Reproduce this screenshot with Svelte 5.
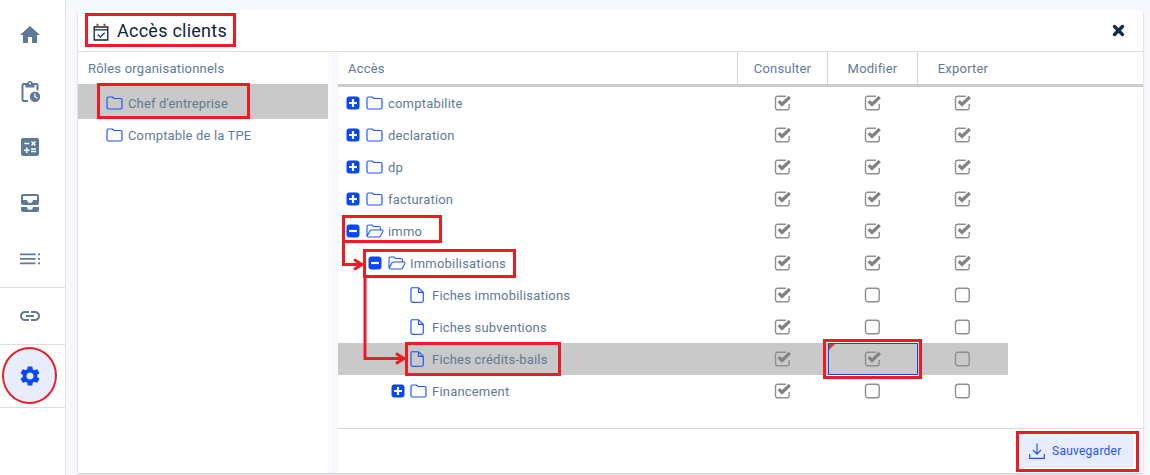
<script>
  const nav = [
    { id: 'home', d: 'M10 20v-6h4v6h5v-8h3L12 3 2 12h3v8z' },
    { id: 'calc', d: 'M19 3H5c-1.1 0-2 .9-2 2v14c0 1.1.9 2 2 2h14c1.1 0 2-.9 2-2V5c0-1.1-.9-2-2-2zm-5.97 4.06L14.09 6l1.41 1.41L16.91 6l1.06 1.06-1.41 1.41 1.41 1.41-1.06 1.06-1.41-1.4-1.41 1.41-1.06-1.06 1.41-1.41-1.41-1.42zm-6.78.66h5v1.5h-5v-1.5zM11.5 16h-2v2H8v-2H6v-1.5h2v-2h1.5v2h2V16zm6.5 1.25h-5v-1.5h5v1.5zm0-2.5h-5v-1.5h5v1.5z' },
    { id: 'inbox', d: 'M19 3H5c-1.1 0-2 .9-2 2v7c0 1.1.9 2 2 2h14c1.1 0 2-.9 2-2V5c0-1.1-.9-2-2-2zm0 6h-4c0 1.62-1.38 3-3 3s-3-1.38-3-3H5V5h14v4zm-4 7h6v3c0 1.1-.9 2-2 2H5c-1.1 0-2-.9-2-2v-3h6c0 1.66 1.34 3 3 3s3-1.34 3-3z' }
  ];
  const linkPath = 'M3.9 12c0-1.71 1.39-3.1 3.1-3.1h4V7H7c-2.76 0-5 2.24-5 5s2.24 5 5 5h4v-1.9H7c-1.71 0-3.1-1.39-3.1-3.1zM8 13h8v-2H8v2zm9-6h-4v1.9h4c1.71 0 3.1 1.39 3.1 3.1s-1.39 3.1-3.1 3.1h-4V17h4c2.76 0 5-2.24 5-5s-2.24-5-5-5z';
  const gearPath = 'M19.14 12.94c.04-.3.06-.61.06-.94 0-.32-.02-.64-.07-.94l2.03-1.58c.18-.14.23-.41.12-.61l-1.92-3.32c-.12-.22-.37-.29-.59-.22l-2.39.96c-.5-.38-1.03-.7-1.62-.94l-.36-2.54c-.04-.24-.24-.41-.48-.41h-3.84c-.24 0-.43.17-.47.41l-.36 2.54c-.59.24-1.13.57-1.62.94l-2.39-.96c-.22-.08-.47 0-.59.22L2.74 8.87c-.12.21-.08.47.12.61l2.03 1.58c-.05.3-.09.63-.09.94s.02.64.07.94l-2.03 1.58c-.18.14-.23.41-.12.61l1.92 3.32c.12.22.37.29.59.22l2.39-.96c.5.38 1.03.7 1.62.94l.36 2.54c.05.24.24.41.48.41h3.84c.24 0 .44-.17.47-.41l.36-2.54c.59-.24 1.13-.56 1.62-.94l2.39.96c.22.08.47 0 .59-.22l1.92-3.32c.12-.22.07-.47-.12-.61l-2.01-1.58zM12 15.6c-1.98 0-3.6-1.62-3.6-3.6s1.62-3.6 3.6-3.6 3.6 1.62 3.6 3.6-1.62 3.6-3.6 3.6z';

  const rows = [
    { label: 'comptabilite', level: 0, toggle: 'plus', icon: 'folder', c: [1, 1, 1] },
    { label: 'declaration', level: 0, toggle: 'plus', icon: 'folder', c: [1, 1, 1] },
    { label: 'dp', level: 0, toggle: 'plus', icon: 'folder', c: [1, 1, 1] },
    { label: 'facturation', level: 0, toggle: 'plus', icon: 'folder', c: [1, 1, 1] },
    { label: 'immo', level: 0, toggle: 'minus', icon: 'open', c: [1, 1, 1] },
    { label: 'Immobilisations', level: 1, toggle: 'minus', icon: 'open', c: [1, 1, 1] },
    { label: 'Fiches immobilisations', level: 2, toggle: '', icon: 'file', c: [1, 0, 0] },
    { label: 'Fiches subventions', level: 2, toggle: '', icon: 'file', c: [1, 0, 0] },
    { label: 'Fiches crédits-bails', level: 2, toggle: '', icon: 'file', c: [1, 1, 0], selected: true },
    { label: 'Financement', level: 2, toggle: 'plus', icon: 'folder', c: [1, 0, 0] }
  ];
  const roles = [
    { label: "Chef d'entreprise", selected: true },
    { label: 'Comptable de la TPE', selected: false }
  ];
  const marks = [
    { n: 'title', x: 85, y: 13, w: 151, h: 34 },
    { n: 'chef', x: 97, y: 83, w: 153, h: 36 },
    { n: 'immo', x: 342, y: 215, w: 100, h: 28 },
    { n: 'immob', x: 363, y: 249, w: 153, h: 29 },
    { n: 'fiche', x: 405, y: 342, w: 156, h: 34 },
    { n: 'cell', x: 823, y: 339, w: 99, h: 40 },
    { n: 'save', x: 1016, y: 431, w: 123, h: 41 }
  ];
</script>

{#snippet folder()}
  <svg class="ico" width="17" height="14" viewBox="0 0 17 14"><path d="M1 3V11.5A1.5 1.5 0 0 0 2.500 13H14.500A1.500 1.500 0 0 0 16 11.500V4A1.500 1.500 0 0 0 14.500 2.500H8L6.500 1H2.500A1.500 1.500 0 0 0 1 2.500Z" fill="none" stroke="#1f55f5" stroke-width="1.200"/></svg>
{/snippet}
{#snippet openFolder()}
  <svg class="ico wide" width="18" height="14" viewBox="0 0 18 14"><path d="M1 12V2.500A1.500 1.500 0 0 1 2.500 1H6L7.500 2.500H13A1.500 1.500 0 0 1 14.500 4V6M1 12.500L4 6.800A1.500 1.500 0 0 1 5.300 6H16A1 1 0 0 1 16.900 7.400L14.500 12A1.800 1.800 0 0 1 13 13H2A1 1 0 0 1 1 12Z" fill="none" stroke="#1f55f5" stroke-width="1.100"/></svg>
{/snippet}
{#snippet file()}
  <svg class="ico narrow" width="14" height="16" viewBox="0 0 14 16"><path d="M1 2A1.500 1.500 0 0 1 2.500 .7H8.500L13.300 5.300V14A1.500 1.500 0 0 1 11.800 15.300H2.500A1.500 1.500 0 0 1 1 14ZM8.500 .7V5.300H13.300" fill="none" stroke="#1f55f5" stroke-width="1.150"/></svg>
{/snippet}
{#snippet checkbox(on)}
  <svg class="box" width="18" height="16" viewBox="0 0 18 16">
    {#if on}
      <path d="M12 1.200H3.700A2.200 2.200 0 0 0 1.500 3.400V12.600A2.200 2.200 0 0 0 3.700 14.800H13A2.200 2.200 0 0 0 15.200 12.600V9" fill="none" stroke="#8f8f8f" stroke-width="1.400"/>
      <path d="M4.700 6.200L8 9.500 15.800 2" fill="none" stroke="#838383" stroke-width="3.200"/>
    {:else}
      <rect x="1.500" y="1.200" width="13.700" height="13.600" rx="2.500" fill="none" stroke="#8f8f8f" stroke-width="1.400"/>
    {/if}
  </svg>
{/snippet}

<div class="page">
  <nav class="side">
    <div class="group first">
      <a class="navitem"><svg width="24" height="24" viewBox="0 0 24 24"><path d={nav[0].d}/></svg></a>
      <a class="navitem"><svg width="24" height="24" viewBox="0 0 24 24">
        <path d="M5.500 4H9.200C9.500 2.700 10.600 1.900 12 1.900S14.500 2.700 14.800 4H18.500A2 2 0 0 1 20.500 6V11.500H18.500V6H16.500V8.500H7.500V6H5.500V21H10V23H5.500A2 2 0 0 1 3.500 21V6A2 2 0 0 1 5.500 4ZM12 3.400A1 1 0 1 0 12 5.400 1 1 0 1 0 12 3.400Z"/>
        <path fill-rule="evenodd" d="M17 12.500A5.200 5.200 0 1 1 17 22.900 5.200 5.200 0 1 1 17 12.500ZM16.300 14.500V18.100L19.200 19.800 19.800 18.800 17.500 17.400V14.500Z"/>
      </svg></a>
      {#each nav.slice(1) as n}
        <a class="navitem"><svg width="24" height="24" viewBox="0 0 24 24"><path d={n.d}/></svg></a>
      {/each}
      <a class="navitem"><svg width="24" height="24" viewBox="0 0 24 24"><path d="M2 6.500H17.500V8.300H2ZM2 11H17.500V12.800H2ZM2 15.500H17.500V17.300H2ZM20 6.500H22V8.300H20ZM20 11H22V12.800H20ZM20 15.500H22V17.300H20Z"/></svg></a>
    </div>
    <div class="group">
      <a class="navitem"><svg width="24" height="24" viewBox="0 0 24 24"><path d={linkPath}/></svg></a>
    </div>
    <div class="group gearwrap">
      <a class="navitem active"><svg width="24" height="24" viewBox="0 0 24 24"><path d={gearPath}/></svg></a>
    </div>
  </nav>

  <main class="card">
    <header class="head">
      <svg class="cal" width="16" height="18" viewBox="0 0 16 18">
        <path d="M1.200 4H14.800V17H1.200ZM1 6.800H15" fill="none" stroke="#10243c" stroke-width="1.300"/>
        <path d="M4.500 .8V5M11.500 .8V5" stroke="#7a5a3a" stroke-width="2"/>
        <path d="M4.700 11.500L7.200 14 11.700 9.800" fill="none" stroke="#123a8c" stroke-width="1.300"/>
      </svg>
      <h1>Accès clients</h1>
      <svg class="close" width="13" height="13" viewBox="0 0 13 13"><path d="M2.500 2.500L10.500 10.500M10.500 2.500L2.500 10.500" stroke="#0f2c4c" stroke-width="3.400" stroke-linecap="round"/></svg>
    </header>
    <div class="body">
      <aside class="roles">
        <div class="rolehead">Rôles organisationnels</div>
        {#each roles as r}
          <div class="role" class:sel={r.selected}>{@render folder()}<span>{r.label}</span></div>
        {/each}
      </aside>
      <section class="main">
        <div class="thead">
          <div class="th first">Accès</div>
          <div class="th">Consulter</div>
          <div class="th">Modifier</div>
          <div class="th">Exporter</div>
        </div>
        <div class="tbody">
          {#each rows as r}
            <div class="tr" class:sel={r.selected}>
              <div class="name lvl{r.level}">
                {#if r.toggle}
                  <svg class="toggle" width="14" height="14" viewBox="0 0 14 14"><rect x=".5" y=".5" width="13" height="13" rx="3" fill="#0a47f0"/><path d={r.toggle === 'plus' ? 'M3 7H11M7 3V11' : 'M3 7H11'} stroke="#fff" stroke-width="2.200"/></svg>
                {:else}
                  <span class="toggle blank"></span>
                {/if}
                {#if r.icon === 'folder'}{@render folder()}{:else if r.icon === 'open'}{@render openFolder()}{:else}{@render file()}{/if}
                <span class="lab">{r.label}</span>
              </div>
              {#each r.c as on, i}
                <div class="td" class:focus={r.selected && i === 1}>{@render checkbox(on)}</div>
              {/each}
            </div>
          {/each}
        </div>
        <footer class="foot">
          <button class="save">
            <svg width="16" height="18" viewBox="0 0 16 18"><path d="M8 1.500V12M4 8L8 12.200 12 8M.7 12V16.300H15.300V12" fill="none" stroke="#1f55f5" stroke-width="1.200"/></svg>
            <span>Sauvegarder</span>
          </button>
        </footer>
      </section>
    </div>
  </main>

  {#each marks as m}
    <div class="mark" style="left:{m.x}px;top:{m.y}px;width:{m.w}px;height:{m.h}px"></div>
  {/each}
  <div class="ring"></div>
  <svg class="arrows" width="1150" height="475" viewBox="0 0 1150 475">
    <path d="M343.500 243V264.500H362M354 259.500L362 264.500 354 269.500M365 278V358.500H404M396 353.500L404 358.500 396 363.500" fill="none" stroke="#ed1c24" stroke-width="3"/>
  </svg>
</div>

<style>
  :global(body) { margin: 0; background: #f7f8fd; }
  .page {
    position: relative; width: 1150px; height: 475px; overflow: hidden;
    display: flex; background: #f7f8fd;
    font-family: Roboto, "Liberation Sans", sans-serif; font-size: 13px; color: #607b94;
  }
  .side {
    width: 65px; flex: none; background: #fff; border-right: 1.5px solid #dfe1e6;
    display: flex; flex-direction: column; padding-top: 7px; box-sizing: content-box;
  }
  .group { border-bottom: 1px solid #dddddd; display: flex; flex-direction: column; align-items: center; padding-right: 5px; }
  .group.gearwrap { padding-top: 4px; padding-bottom: 5px; }
  .navitem { width: 56px; height: 56px; display: flex; align-items: center; justify-content: center; border-radius: 50%; }
  .navitem svg { fill: #5f7a96; }
  .navitem.active { width: 50px; height: 53px; background: #e8edfd; }
  .navitem.active svg { fill: #0a47f5; }

  .card {
    margin: 10px 7px 2px 12px; flex: 1; display: flex; flex-direction: column;
    background: #fff; box-shadow: 0 1px 2px rgba(0,0,0,.22);
  }
  .head {
    height: 41px; flex: none; display: flex; align-items: center; padding: 0 18px 0 15px;
    border-bottom: 1px solid #dfdfdf;
  }
  .cal { margin-right: 8px; margin-top: 2px; }
  h1 { margin: 0; flex: 1; font-size: 18px; font-weight: 400; letter-spacing: .25px; color: #10243c; }
  .body { flex: 1; display: flex; min-height: 0; background: #f8f9fe; gap: 10px; }
  .roles { width: 250px; flex: none; background: #fff; }
  .rolehead { height: 32px; line-height: 34px; padding-left: 10px; letter-spacing: .22px; }
  .role { height: 32px; display: flex; align-items: center; padding-left: 28px; gap: 5px; letter-spacing: .15px; box-sizing: border-box; }
  .role.sel { background: #c9c9c9; height: 35px; padding-top: 3px; }
  .main { flex: 1; background: #fff; display: flex; flex-direction: column; }
  .thead { height: 32px; display: grid; grid-template-columns: 399px 90px 90px 91px; border-bottom: 3px solid #cccccc; flex: none; }
  .th { display: flex; align-items: center; justify-content: center; border-left: 1px solid #d3d3d3; letter-spacing: .2px; }
  .th.first { border-left: 0; justify-content: flex-start; padding-left: 10px; }
  .tbody { flex: 1; }
  .tr { height: 32px; width: 670px; display: grid; grid-template-columns: 400px 90px 90px 90px; }
  .tr.sel { background: #c9c9c9; }
  .name { display: flex; align-items: center; letter-spacing: .2px; }
  .lvl0 { padding-left: 8px; }
  .lvl1 { padding-left: 30px; }
  .lvl2 { padding-left: 53px; }
  .toggle { width: 14px; height: 14px; flex: none; margin-right: 6px; }
  .lvl2 .toggle { margin-right: 5px; }
  .ico { flex: none; }
  .lab { margin-left: 5px; }
  .wide + .lab { margin-left: 4px; }
  .narrow + .lab { margin-left: 8px; }
  .td { position: relative; display: flex; align-items: center; justify-content: center; }
  .td.focus { border: 1px solid #0a47f5; box-sizing: border-box; }
  .td.focus::before {
    content: ""; position: absolute; left: 0; top: 0; width: 0; height: 0;
    border-top: 6px solid #c8452a; border-right: 6px solid transparent;
  }
  .foot { height: 45px; flex: none; border-top: 1px solid #d9d9d9; display: flex; justify-content: flex-end; align-items: flex-start; padding: 5px 9px 0 0; box-sizing: border-box; }
  .save {
    width: 115px; height: 34px; border: 0; border-radius: 4px; background: #e8edfd; color: #1f55f5;
    font: inherit; font-size: 12px; letter-spacing: .25px; display: flex; align-items: center; gap: 7px; padding: 0 0 0 10px;
  }
  .mark { position: absolute; border: 3px solid #ed1c24; box-sizing: border-box; pointer-events: none; }
  .ring { position: absolute; left: 2px; top: 347px; width: 55px; height: 57px; border: 2.500px solid #ed1c24; border-radius: 50%; box-sizing: border-box; }
  .arrows { position: absolute; left: 0; top: 0; pointer-events: none; }
</style>
